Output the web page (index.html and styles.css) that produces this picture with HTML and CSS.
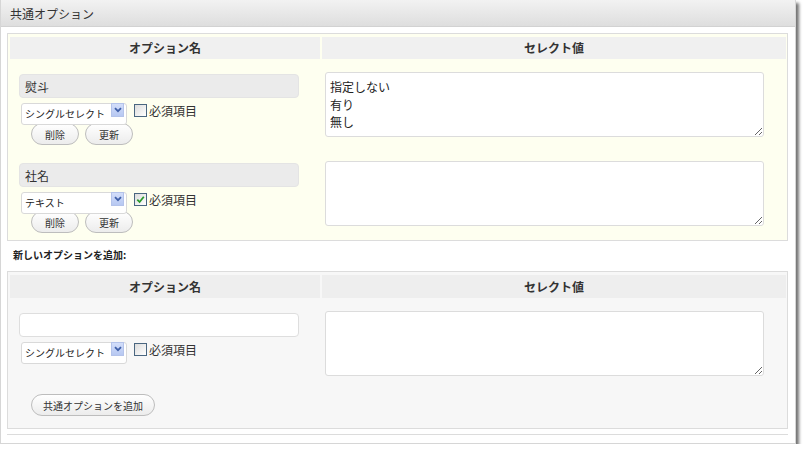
FILE: index.html
```html
<!DOCTYPE html>
<html lang="ja">
<head>
<meta charset="utf-8">
<title>共通オプション</title>
<link rel="stylesheet" href="styles.css">
</head>
<body>
<div class="panel">
  <div class="panel-head">共通オプション</div>
  <div class="panel-body">
    <div class="opt-table existing">
      <div class="th">オプション名</div>
      <div class="th">セレクト値</div>

      <div class="td name-cell">
        <input class="name-box" type="text" value="熨斗" readonly>
        <div class="type-row">
          <span class="select-wrap">
            <select class="type-select"><option>シングルセレクト</option></select>
            <span class="select-arrow"><svg width="8" height="6" viewBox="0 0 8 6"><path d="M1 1.2 L4 4.2 L7 1.2" fill="none" stroke="#3f5fa8" stroke-width="1.8"/></svg></span>
          </span>
          <span class="check"></span><span class="check-label">必須項目</span>
        </div>
        <div class="btn-row">
          <button class="btn">削除</button><button class="btn">更新</button>
        </div>
      </div>
      <div class="td value-cell">
        <textarea class="values">指定しない
有り
無し</textarea>
      </div>

      <div class="td name-cell second">
        <input class="name-box" type="text" value="社名" readonly>
        <div class="type-row">
          <span class="select-wrap">
            <select class="type-select"><option>テキスト</option></select>
            <span class="select-arrow"><svg width="8" height="6" viewBox="0 0 8 6"><path d="M1 1.2 L4 4.2 L7 1.2" fill="none" stroke="#3f5fa8" stroke-width="1.8"/></svg></span>
          </span>
          <span class="check checked"><svg width="9" height="9" viewBox="0 0 9 9"><path d="M1.3 4.6 L3.6 7 L7.8 1.8" fill="none" stroke="#2a9a2a" stroke-width="1.8"/></svg></span><span class="check-label">必須項目</span>
        </div>
        <div class="btn-row tight">
          <button class="btn">削除</button><button class="btn">更新</button>
        </div>
      </div>
      <div class="td value-cell second">
        <textarea class="values"></textarea>
      </div>
    </div>

    <div class="add-label">新しいオプションを追加:</div>

    <div class="opt-table adding">
      <div class="th">オプション名</div>
      <div class="th">セレクト値</div>

      <div class="td name-cell">
        <input class="name-box blank" type="text" value="">
        <div class="type-row">
          <span class="select-wrap">
            <select class="type-select"><option>シングルセレクト</option></select>
            <span class="select-arrow"><svg width="8" height="6" viewBox="0 0 8 6"><path d="M1 1.2 L4 4.2 L7 1.2" fill="none" stroke="#3f5fa8" stroke-width="1.8"/></svg></span>
          </span>
          <span class="check"></span><span class="check-label">必須項目</span>
        </div>
        <div class="btn-row add-row">
          <button class="btn wide">共通オプションを追加</button>
        </div>
      </div>
      <div class="td value-cell add">
        <textarea class="values"></textarea>
      </div>
    </div>
    <div class="foot-line"></div>
  </div>
</div>
</body>
</html>
```

FILE: styles.css
```css
html, body {
  margin: 0;
  padding: 0;
  background: #ffffff;
}

body {
  font-family: "Noto Sans CJK JP", "Noto Sans", sans-serif;
  color: #333333;
}

.panel {
  box-sizing: border-box;
  width: 796px;
  height: 444px;
  border: 1px solid #d6d6d6;
  border-top: none;
  background: #ffffff;
  box-shadow: 3px 3px 3px rgba(0, 0, 0, 0.55);
}

.panel-head {
  height: 27px;
  box-sizing: border-box;
  padding-left: 9px;
  font-size: 12px;
  line-height: 27px;
  color: #333;
  background: linear-gradient(#f2f2f2, #dedede);
  border-bottom: 1px solid #d2d2d2;
}

.panel-body {
  padding: 6px 7px 0 6px;
}

.opt-table {
  box-sizing: border-box;
  width: 781px;
  border: 1px solid #dcdcdc;
  padding: 3px 1px 0 2px;
  display: grid;
  grid-template-columns: 310px 464px;
  column-gap: 2px;
}

.existing {
  background: #fefff0;
}

.adding {
  background: #f7f7f7;
}

.th {
  height: 22px;
  background: #f0f0f0;
  text-align: center;
  font-size: 12px;
  font-weight: bold;
  line-height: 22px;
  color: #333;
}

.adding .th {
  height: 23px;
  line-height: 23px;
  background: #eeeeee;
}

.td {
  display: flex;
  flex-direction: column;
  align-items: flex-start;
}

.name-cell {
  padding: 15px 0 3px 9px;
}

.name-cell.second {
  padding: 15px 0 7px 9px;
}

.adding .name-cell {
  padding: 15px 0 12px 9px;
}

.value-cell {
  padding: 13px 0 0 3px;
}

.value-cell.add {
  padding-top: 13px;
}

.name-box {
  box-sizing: border-box;
  width: 280px;
  height: 24px;
  margin: 0;
  padding: 0 5px;
  border: 1px solid #e4e4e4;
  border-radius: 4px;
  background: #ebebeb;
  font-family: inherit;
  font-size: 12px;
  color: #333;
  outline: none;
}

.name-box.blank {
  background: #ffffff;
  border-color: #dedede;
}

.type-row {
  display: flex;
  align-items: center;
  margin: 1px 0 0 2px;
  height: 22px;
}

.select-wrap {
  position: relative;
  display: inline-block;
  width: 106px;
  height: 22px;
}

.type-select {
  -webkit-appearance: none;
  appearance: none;
  box-sizing: border-box;
  width: 106px;
  height: 22px;
  margin: 0;
  padding: 0 0 0 3px;
  border: 1px solid #d9d9d9;
  border-radius: 3px;
  background: #ffffff;
  font-family: inherit;
  font-size: 10px;
  line-height: 20px;
  color: #222;
}

.select-arrow {
  position: absolute;
  right: 3px;
  top: 4px;
  width: 13px;
  height: 14px;
  box-sizing: border-box;
  border: 1px solid #b4c3ea;
  background: linear-gradient(#d3defa, #b7c8f2);
  display: flex;
  align-items: center;
  justify-content: center;
  pointer-events: none;
}

.check {
  box-sizing: border-box;
  width: 13px;
  height: 13px;
  margin-left: 7px;
  border: 1px solid #4a6680;
  background: linear-gradient(135deg, #dcdcdc, #ffffff);
  display: flex;
  align-items: center;
  justify-content: center;
}

.check-label {
  margin-left: 2px;
  font-size: 12px;
  color: #333;
}

.btn-row {
  display: flex;
  gap: 6px;
  margin: 2px 0 0 12px;
}

.btn-row.tight {
  margin-top: 1px;
}

.btn-row.add-row {
  margin-top: 34px;
}

.btn {
  box-sizing: border-box;
  height: 22px;
  margin: 0;
  padding: 0 13px;
  border: 1px solid #bdbdbd;
  border-radius: 11px;
  background: linear-gradient(#ffffff, #ececec);
  font-family: inherit;
  font-size: 10px;
  color: #333;
}

.btn.wide {
  width: 124px;
  padding: 0 6px;
}

.values {
  box-sizing: border-box;
  width: 439px;
  height: 65px;
  margin: 0;
  padding: 5px 4px 3px;
  border: 1px solid #dcdcdc;
  border-radius: 3px;
  background: #ffffff;
  font-family: inherit;
  font-size: 12px;
  line-height: 17.5px;
  color: #222;
  resize: both;
  outline: none;
}

.add-label {
  height: 30px;
  padding-left: 6px;
  font-size: 10px;
  font-weight: bold;
  line-height: 28px;
  color: #222;
}

.foot-line {
  width: 781px;
  margin-top: 5px;
  border-top: 1px solid #dcdcdc;
}
```
